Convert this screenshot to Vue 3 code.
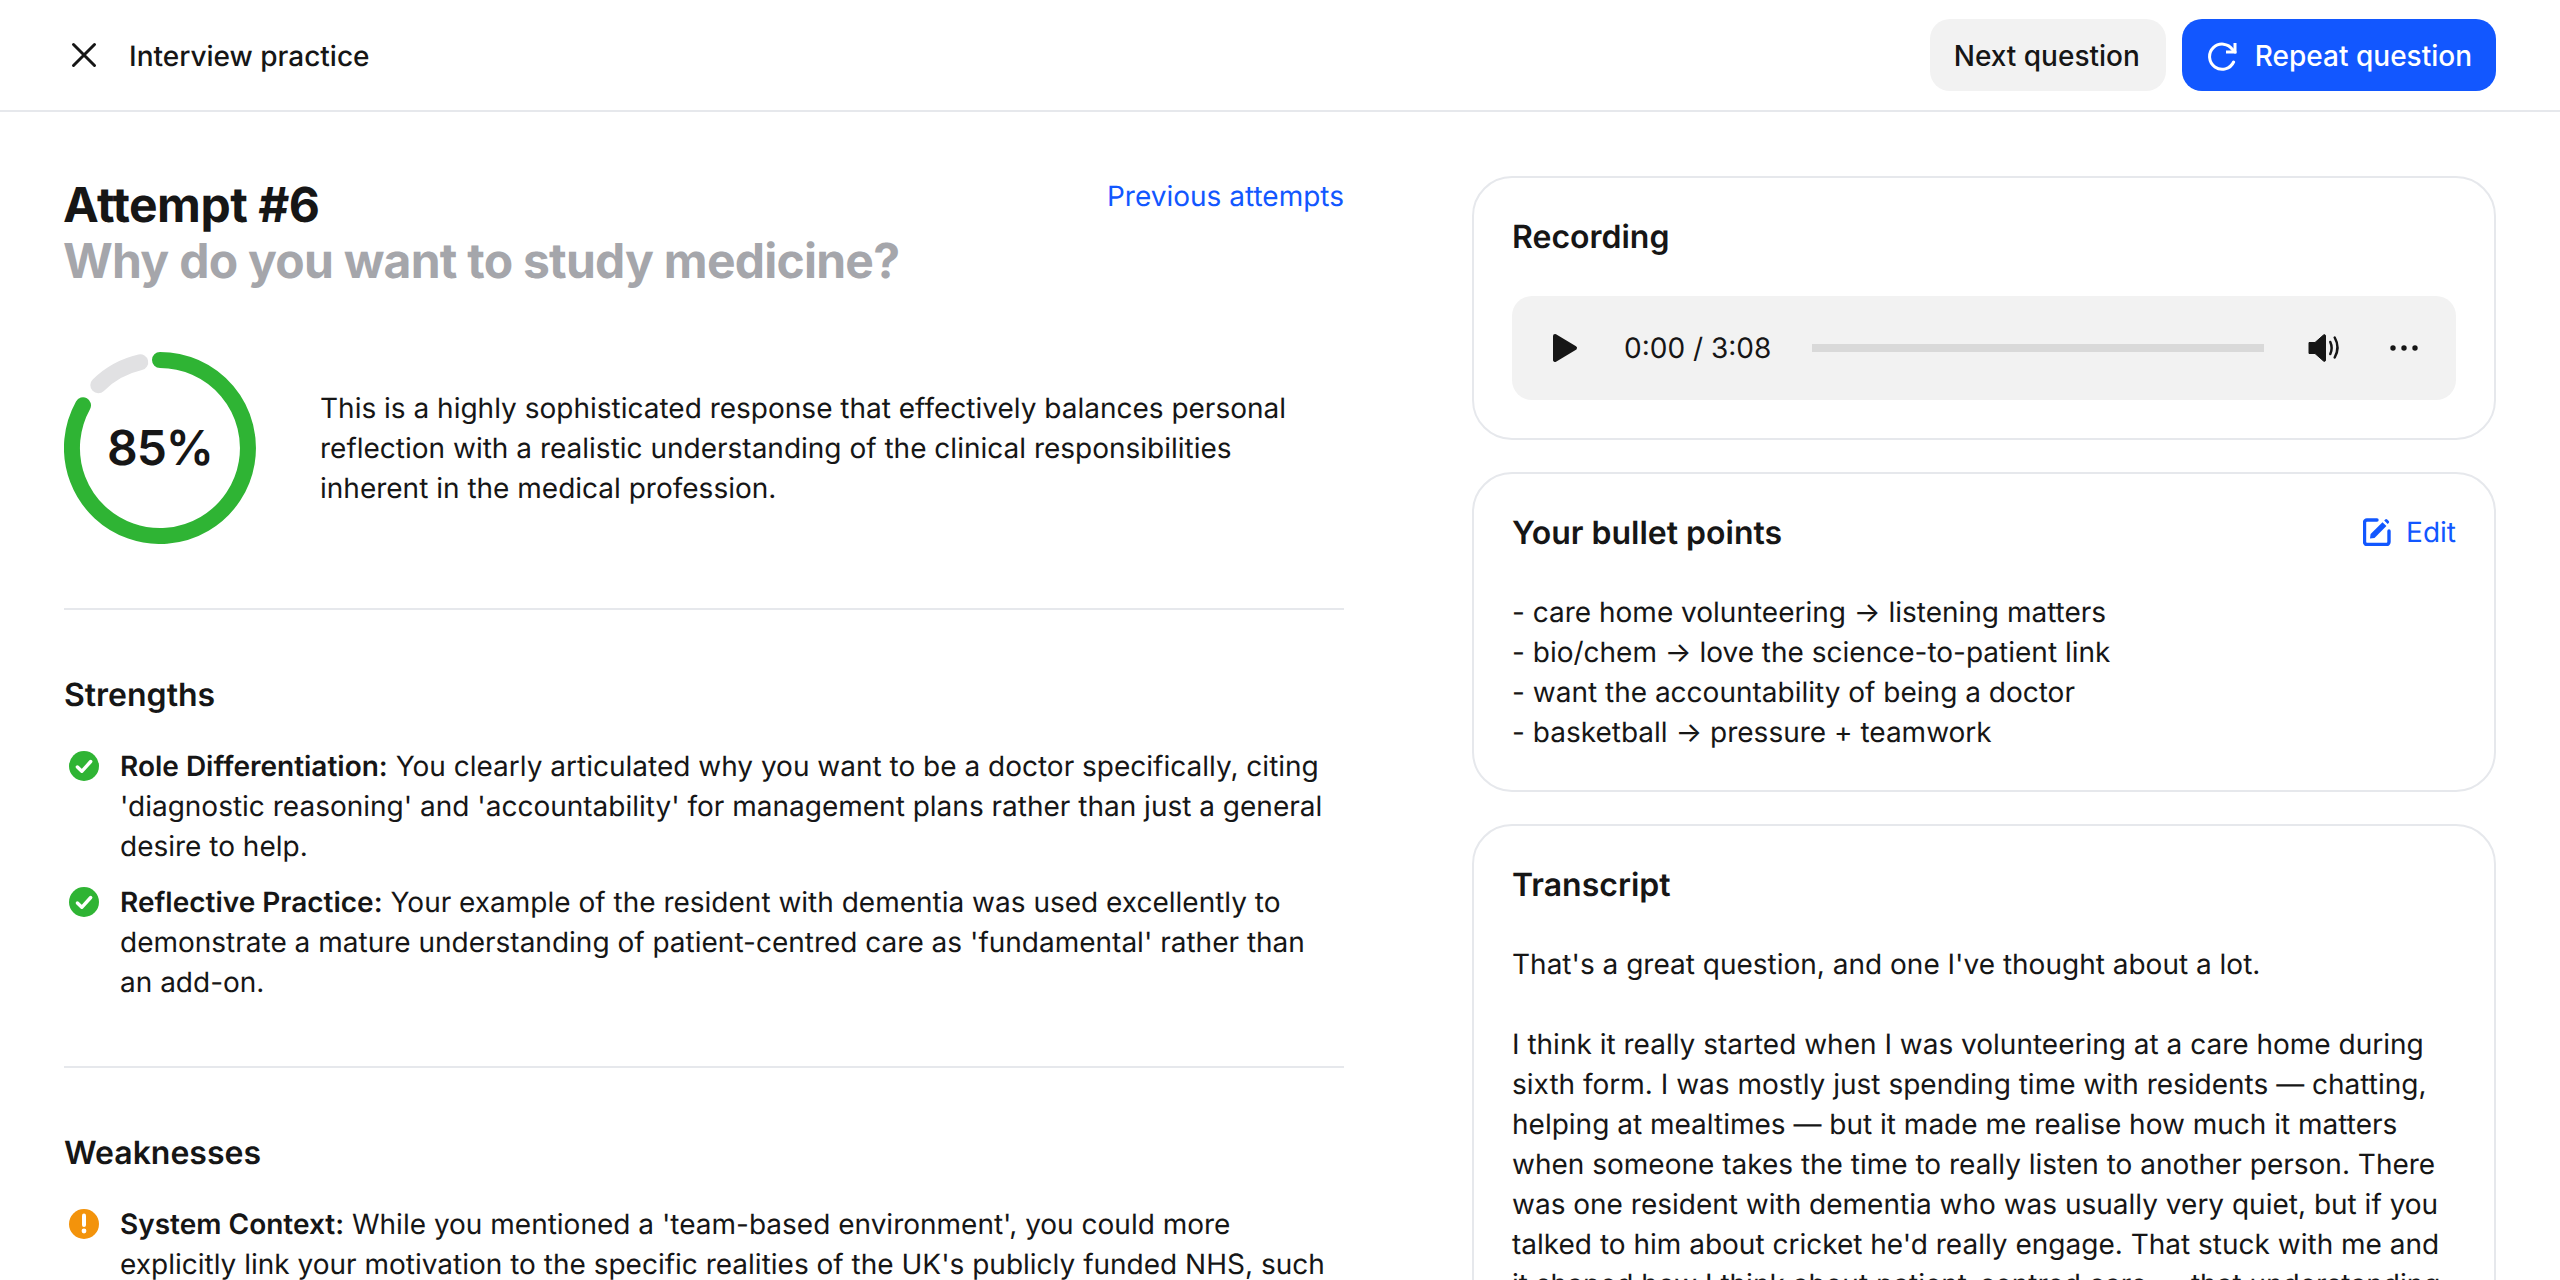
<template>
  <div class="page">
    <header class="topbar">
      <div class="topbar-left">
        <svg class="close-icon" viewBox="0 0 40 40" fill="none" stroke="#161616" stroke-width="3" stroke-linecap="round">
          <path d="M9.500 9.500l21 21M30.500 9.500l-21 21" />
        </svg>
        <span class="topbar-title">Interview practice</span>
      </div>
      <div class="topbar-actions">
        <button class="btn btn-grey">Next question</button>
        <button class="btn btn-blue">
          <svg class="btn-icon" viewBox="0 0 32 32" fill="none" stroke="#fff" stroke-width="3" stroke-linecap="round" stroke-linejoin="round">
            <path d="M27.600 22A12.600 12.600 0 1 1 26.600 9.600L29 12" />
            <path d="M29 3v9h-9" stroke-linecap="butt" stroke-linejoin="miter" />
          </svg>
          Repeat question
        </button>
      </div>
    </header>

    <main class="content">
      <section class="left">
        <div class="title-row">
          <h1 class="title">
            Attempt #6
            <span class="title-sub">Why do you want to study medicine?</span>
          </h1>
          <a class="link">Previous attempts</a>
        </div>

        <div class="score-row">
          <div class="ring">
            <svg viewBox="0 0 192 192" fill="none" stroke-width="16" stroke-linecap="round">
              <path d="M76.200 10.300A88 88 0 0 0 34.300 33.200" stroke="#e1e1e3" />
              <path d="M96 8A88 88 0 1 1 19 53.300" stroke="#2fb434" />
            </svg>
            <span class="ring-label">85%</span>
          </div>
          <p class="summary">
            This is a highly sophisticated response that effectively balances personal reflection with a realistic understanding of the clinical responsibilities inherent in the medical profession.
          </p>
        </div>

        <div class="feedback">
          <h2 class="heading">Strengths</h2>
          <ul class="points">
            <li v-for="item in strengths" :key="item.label" class="point">
              <svg class="point-icon" viewBox="0 0 40 40">
                <circle cx="20" cy="20" r="15" fill="#2fb434" />
                <path d="M13.400 21l4.400 4.300 8.900-9.800" fill="none" stroke="#fff" stroke-width="3.400" stroke-linecap="round" stroke-linejoin="round" />
              </svg>
              <p><strong>{{ item.label }}</strong> {{ item.text }}</p>
            </li>
          </ul>
        </div>

        <div class="feedback">
          <h2 class="heading">Weaknesses</h2>
          <ul class="points">
            <li v-for="item in weaknesses" :key="item.label" class="point">
              <svg class="point-icon" viewBox="0 0 40 40">
                <circle cx="20" cy="20" r="15" fill="#f3930b" />
                <path d="M20 11.500v9.500" fill="none" stroke="#fff" stroke-width="4" stroke-linecap="round" />
                <circle cx="20" cy="27" r="2.400" fill="#fff" />
              </svg>
              <p><strong>{{ item.label }}</strong> {{ item.text }}</p>
            </li>
          </ul>
        </div>
      </section>

      <aside class="right">
        <div class="card">
          <h2 class="heading">Recording</h2>
          <div class="player">
            <svg class="play" viewBox="0 0 26 30">
              <path d="M3 3l20 12L3 27z" fill="#161616" stroke="#161616" stroke-width="4" stroke-linejoin="round" />
            </svg>
            <span class="time">0:00 / 3:08</span>
            <div class="track"></div>
            <svg class="volume" viewBox="0 0 34 28" fill="none">
              <path d="M1 8.500h6L15.500 1Q17.500 0 17.500 2v24q0 2-2 1L7 19.500H1z" fill="#161616" stroke="#161616" stroke-linejoin="round" />
              <path d="M22.300 8q2.700 6 0 12M26.700 3.500q5.600 10 0 20" stroke="#161616" stroke-width="2.500" stroke-linecap="round" />
            </svg>
            <svg class="dots" viewBox="0 0 28 6" fill="#161616">
              <circle cx="3" cy="3" r="2.700" />
              <circle cx="14" cy="3" r="2.700" />
              <circle cx="25" cy="3" r="2.700" />
            </svg>
          </div>
        </div>

        <div class="card">
          <div class="card-head">
            <h2 class="heading">Your bullet points</h2>
            <a class="link edit">
              <svg class="edit-icon" viewBox="0 0 28 28" fill="none">
                <path d="M14 2H4a2.500 2.500 0 0 0-2.500 2.500V24A2.500 2.500 0 0 0 4 26.500h19.500A2.500 2.500 0 0 0 26 24V13" stroke="#1257ff" stroke-width="3.400" stroke-linecap="round" />
                <path d="M7 20.500l.6-4.500L19.500 4.200l3.900 3.900L11.500 20z" fill="#1257ff" />
                <path d="M21.200 2.600l1-1a1.400 1.400 0 0 1 2 0l1.500 1.500a1.400 1.400 0 0 1 0 2l-1 1z" fill="#1257ff" />
              </svg>
              Edit
            </a>
          </div>
          <p class="body-text">{{ bullets }}</p>
        </div>

        <div class="card card-last">
          <h2 class="heading">Transcript</h2>
          <p class="body-text">{{ transcript }}</p>
        </div>
      </aside>
    </main>
  </div>
</template>

<script setup>
const strengths = [
  {
    label: 'Role Differentiation:',
    text: "You clearly articulated why you want to be a doctor specifically, citing 'diagnostic reasoning' and 'accountability' for management plans rather than just a general desire to help.",
  },
  {
    label: 'Reflective Practice:',
    text: "Your example of the resident with dementia was used excellently to demonstrate a mature understanding of patient-centred care as 'fundamental' rather than an add-on.",
  },
];

const weaknesses = [
  {
    label: 'System Context:',
    text: "While you mentioned a 'team-based environment', you could more explicitly link your motivation to the specific realities of the UK's publicly funded NHS, such",
  },
];

const bullets = `- care home volunteering → listening matters
- bio/chem → love the science-to-patient link
- want the accountability of being a doctor
- basketball → pressure + teamwork`;

const transcript = `That's a great question, and one I've thought about a lot.

I think it really started when I was volunteering at a care home during sixth form. I was mostly just spending time with residents — chatting, helping at mealtimes — but it made me realise how much it matters when someone takes the time to really listen to another person. There was one resident with dementia who was usually very quiet, but if you talked to him about cricket he'd really engage. That stuck with me and it shaped how I think about patient-centred care — that understanding`;
</script>

<style>
html,
body {
  margin: 0;
  overflow: hidden;
  background: #fff;
}
</style>

<style scoped>
.page {
  height: 1280px;
  overflow: hidden;
  font-family: Inter, "Liberation Sans", sans-serif;
  font-size: 28px;
  line-height: 40px;
  color: #161616;
  text-rendering: geometricPrecision;
}

.topbar {
  display: flex;
  align-items: center;
  justify-content: space-between;
  box-sizing: border-box;
  height: 112px;
  padding: 0 64px;
  border-bottom: 2px solid #e6e8ec;
}

.topbar-left {
  display: flex;
  align-items: center;
  gap: 25px;
}

.close-icon {
  width: 40px;
  height: 40px;
}

.topbar-title {
  font-weight: 500;
  padding-top: 2px;
}

.topbar-actions {
  display: flex;
  gap: 16px;
}

.btn {
  display: flex;
  align-items: center;
  gap: 17px;
  box-sizing: border-box;
  height: 72px;
  padding: 2px 24px 0;
  border: 0;
  border-radius: 20px;
  font: inherit;
  font-weight: 500;
}

.btn-grey {
  padding: 2px 26px 0 24px;
  background: #f2f2f2;
  color: #161616;
}

.btn-blue {
  background: #1257ff;
  color: #fff;
}

.btn-icon {
  width: 32px;
  height: 32px;
}

.content {
  display: grid;
  grid-template-columns: 1280px 1024px;
  gap: 128px;
  padding: 64px 64px 0;
}

.title-row {
  display: flex;
  justify-content: space-between;
  align-items: flex-start;
}

.title {
  margin: 0 0 0 -1px;
  padding-top: 1px;
  font-size: 48px;
  line-height: 56px;
  font-weight: 700;
  letter-spacing: -0.5px;
}

.title-sub {
  display: block;
  color: #a5a6ab;
  letter-spacing: -0.75px;
}

.link {
  color: #1257ff;
}

.score-row {
  display: flex;
  align-items: center;
  gap: 64px;
  margin-top: 63px;
  padding-bottom: 64px;
  border-bottom: 2px solid #e6e8ec;
}

.ring {
  position: relative;
  flex: none;
  width: 192px;
  height: 192px;
}

.ring svg {
  display: block;
  width: 192px;
  height: 192px;
}

.ring-label {
  position: absolute;
  inset: 0;
  display: flex;
  align-items: center;
  justify-content: center;
  font-size: 48px;
  font-weight: 600;
  letter-spacing: -1px;
}

.summary {
  margin: 0;
}

.feedback {
  padding: 64px 0;
  border-bottom: 2px solid #e6e8ec;
}

.heading {
  margin: 0;
  padding-top: 2px;
  font-size: 32px;
  line-height: 38px;
  font-weight: 600;
}

.points {
  display: flex;
  flex-direction: column;
  gap: 16px;
  margin: 32px 0 0;
  padding: 0;
  list-style: none;
}

.point {
  display: flex;
  gap: 16px;
}

.point p {
  margin: 0;
}

.point strong {
  font-weight: 600;
}

.point-icon {
  flex: none;
  width: 40px;
  height: 40px;
}

.right {
  display: flex;
  flex-direction: column;
  gap: 32px;
}

.card {
  box-sizing: border-box;
  padding: 38px;
  border: 2px solid #e6e8ec;
  border-radius: 40px;
}

.card-head {
  display: flex;
  justify-content: space-between;
  align-items: center;
}

.edit {
  display: flex;
  align-items: center;
  gap: 15px;
}

.edit-icon {
  width: 28px;
  height: 28px;
}

.body-text {
  margin: 40px 0 0;
  white-space: pre-wrap;
}

.player {
  display: flex;
  align-items: center;
  height: 104px;
  margin-top: 40px;
  padding: 0 38px 0 40px;
  border-radius: 20px;
  background: #f2f2f2;
}

.play {
  width: 26px;
  height: 30px;
}

.time {
  margin-left: 46px;
}

.track {
  flex: 1;
  height: 8px;
  margin: 0 44px 0 41px;
  background: #d9d9d9;
}

.volume {
  width: 34px;
  height: 28px;
}

.dots {
  width: 28px;
  height: 6px;
  margin-left: 48px;
}
</style>
